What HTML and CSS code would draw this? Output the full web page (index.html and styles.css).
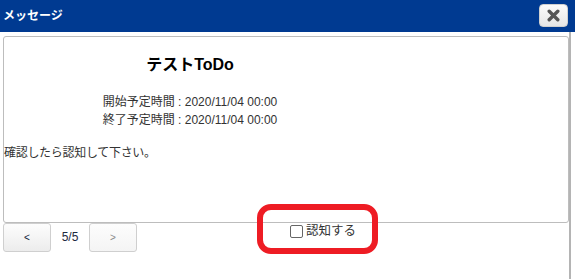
FILE: index.html
```html
<!DOCTYPE html>
<html lang="ja">
<head>
<meta charset="utf-8">
<title>メッセージ</title>
<link rel="stylesheet" href="styles.css">
</head>
<body>
<div class="dialog">
  <div class="titlebar">
    <span class="title">メッセージ</span>
    <button class="close" aria-label="close">
      <svg width="13" height="13" viewBox="0 0 13 13"><path d="M2.2 2.2 L10.8 10.8 M10.8 2.2 L2.2 10.8" stroke="#555" stroke-width="3.4" stroke-linecap="round"/></svg>
    </button>
  </div>
  <div class="body">
    <div class="box">
      <div class="center">
        <div class="todo">テストToDo</div>
        <div class="times">
          <div>開始予定時間 : 2020/11/04 00:00</div>
          <div>終了予定時間 : 2020/11/04 00:00</div>
        </div>
      </div>
      <div class="msg">確認したら認知して下さい。</div>
    </div>
    <div class="footer">
      <button class="nav prev">&lt;</button>
      <span class="count">5/5</span>
      <button class="nav next">&gt;</button>
      <label class="ack"><span class="cb"></span>認知する</label>
    </div>
  </div>
  <div class="mark"></div>
</div>
</body>
</html>
```
FILE: styles.css
```css
html, body {
  margin: 0;
  padding: 0;
  background: #fff;
}
body {
  font-family: "Liberation Sans", "Noto Sans CJK JP", sans-serif;
  font-size: 12px;
  color: #333;
  width: 575px;
  height: 279px;
  overflow: hidden;
}
.dialog {
  position: relative;
  width: 575px;
  height: 279px;
}
.titlebar {
  height: 32px;
  background: #003a91;
  display: flex;
  align-items: center;
  justify-content: space-between;
  padding: 0 7px 0 3px;
}
.title {
  color: #fff;
  font-weight: bold;
  font-size: 12px;
  line-height: 16px;
}
.close {
  width: 29px;
  height: 23px;
  margin: 0;
  padding: 0;
  border: 1px solid #d0d0d0;
  border-radius: 4px;
  background: linear-gradient(#fbfbfb, #e6e6e6);
  display: flex;
  align-items: center;
  justify-content: center;
  margin-top: -1px;
}
.close svg { display: block; }
.body {
  width: 571px;
  height: 247px;
  border-right: 2px solid #b4b4b4;
  padding-top: 4px;
  box-sizing: border-box;
}
.box {
  margin-left: 3px;
  width: 566px;
  height: 187px;
  box-sizing: border-box;
  border: 1px solid #bdbdbd;
  border-radius: 3px;
}
.center {
  width: 372px;
  text-align: center;
}
.todo {
  margin-top: 18px;
  font-size: 16px;
  line-height: 20px;
  font-weight: bold;
  color: #000;
}
.times {
  margin-top: 18px;
  line-height: 18px;
}
.msg {
  margin-top: 15px;
  line-height: 18px;
  font-size: 12px;
  letter-spacing: -0.3px;
}
.footer {
  display: flex;
  align-items: flex-start;
  height: 30px;
}
.nav {
  width: 48px;
  height: 29px;
  margin: 0;
  padding: 0;
  border: 1px solid #cfcfcf;
  border-radius: 3px;
  background: linear-gradient(#fdfdfd, #ececec);
  font-family: "Liberation Sans", sans-serif;
  font-size: 10px;
}
.prev {
  margin-left: 3px;
  color: #0b1a3a;
}
.next {
  color: #8a8a8a;
  background: linear-gradient(#fdfdfd, #f4f4f4);
}
.count {
  width: 38px;
  text-align: center;
  line-height: 29px;
  color: #1e2a40;
  font-size: 12px;
}
.ack {
  margin-left: 153px;
  display: flex;
  align-items: center;
  line-height: 16px;
  font-size: 12.5px;
  color: #333;
}
.cb {
  width: 11px;
  height: 11px;
  border: 1px solid #666;
  border-radius: 2px;
  margin-right: 3px;
  background: #fff;
}
.mark {
  position: absolute;
  left: 257px;
  top: 204px;
  width: 121px;
  height: 50px;
  box-sizing: border-box;
  border: 6px solid #ee1c24;
  border-radius: 14px;
}
```
